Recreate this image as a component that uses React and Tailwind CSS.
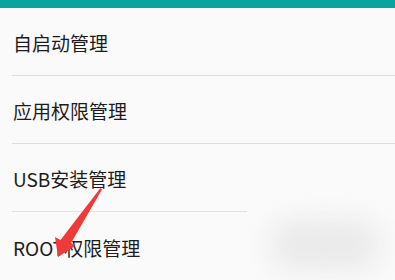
const rows = [
  { label: '自启动管理', line: 'full' },
  { label: '应用权限管理', line: 'full' },
  { label: 'USB安装管理', line: 'short' },
  { label: 'ROOT权限管理', line: 'none' },
]

export default function App() {
  return (
    <div
      className="relative w-[395px] h-[280px] overflow-hidden bg-[#fafafa]"
      style={{ fontFamily: '"Noto Sans CJK SC", "Noto Sans", sans-serif' }}
    >
      <div className="h-[8px] bg-[#0ba39d]" />
      {rows.map((r) => (
        <div key={r.label} className="h-[68px] flex flex-col">
          <div className="flex-1 flex items-center pl-[13px] pt-[2px] text-[19px] text-[#1c1c1c] leading-none">
            {r.label}
          </div>
          {r.line === 'full' && <div className="ml-[12px] h-px bg-[#dedede]" />}
          {r.line === 'short' && <div className="ml-[12px] w-[235px] h-px bg-[#e2e2e2]" />}
        </div>
      ))}

      {/* soft blur in the lower right */}
      <div className="absolute left-[270px] top-[220px] w-[110px] h-[50px] rounded-full bg-[#e9e9e9] blur-[14px]" />

      {/* red annotation arrow */}
      <svg className="absolute left-0 top-0" width="395" height="280" viewBox="0 0 395 280">
        <path d="M100.5 188 L102 189.5 L71 243 L75 246 L58 257 L55 237 L60.5 240 Z" fill="#f03a3a" />
      </svg>
    </div>
  )
}
